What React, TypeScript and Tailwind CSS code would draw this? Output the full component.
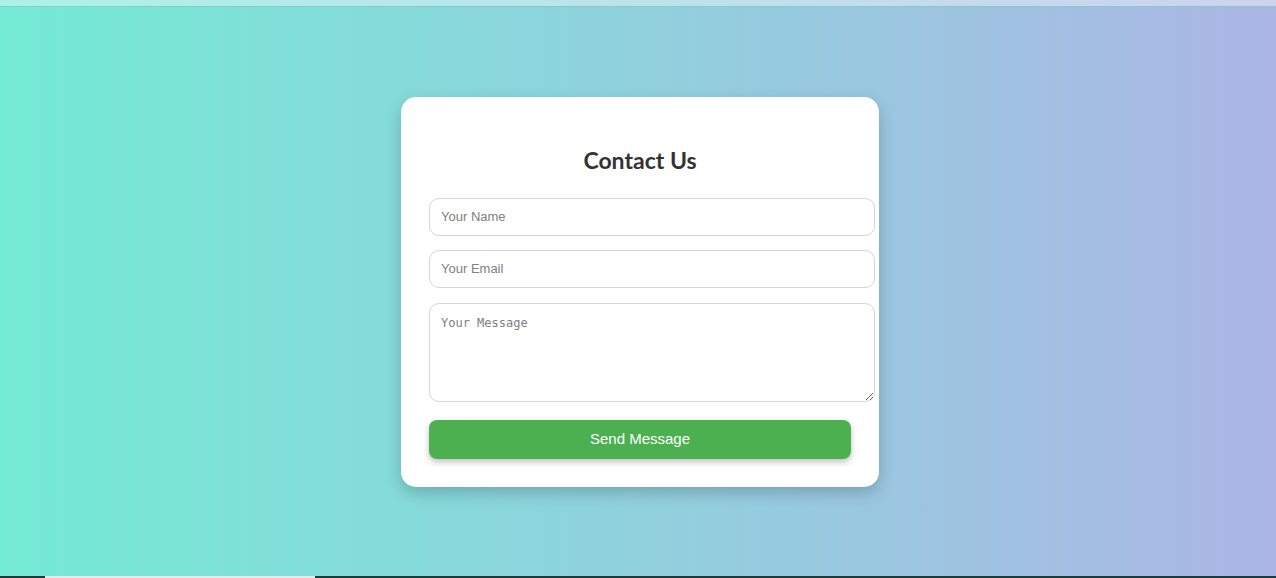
// App.tsx
import { FC } from "react";

const ContactCard: FC = () => {
  return (
    <div className="w-[478px] rounded-[15px] bg-white px-[28px] pt-[47px] pb-[28px] shadow-[0_6px_16px_rgba(0,0,0,0.2)]">
      <h2 className="text-center text-[23px] font-bold leading-[32px] text-[#333] font-['Lato','Open_Sans',sans-serif] mb-[22px]">
        Contact Us
      </h2>
      <form className="flex flex-col" onSubmit={(e) => e.preventDefault()}>
        <input
          type="text"
          placeholder="Your Name"
          className="w-[446px] h-[38px] rounded-[10px] border border-[#d4d4d4] px-[11px] text-[13px] text-[#333] placeholder:text-[#808080] font-['Liberation_Sans',Arial,sans-serif] outline-none mb-[14px]"
        />
        <input
          type="email"
          placeholder="Your Email"
          className="w-[446px] h-[38px] rounded-[10px] border border-[#d4d4d4] px-[11px] text-[13px] text-[#333] placeholder:text-[#808080] font-['Liberation_Sans',Arial,sans-serif] outline-none mb-[15px]"
        />
        <textarea
          placeholder="Your Message"
          className="w-[446px] h-[99px] rounded-[10px] border border-[#d4d4d4] px-[11px] py-[10px] text-[12px] text-[#333] placeholder:text-[#808080] font-['DejaVu_Sans_Mono',monospace] outline-none mb-[18px]"
        />
        <button
          type="submit"
          className="w-[422px] h-[39px] rounded-[8px] bg-[#4caf50] text-white text-[15px] font-['Liberation_Sans',Arial,sans-serif] shadow-[0_3px_6px_rgba(0,0,0,0.25)]"
        >
          Send Message
        </button>
      </form>
    </div>
  );
};

const App: FC = () => {
  return (
    <div className="flex h-[578px] w-full flex-col bg-[linear-gradient(to_right,#74ebd5,#acb6e5)]">
      {/* top strip */}
      <div className="h-[7px] bg-white/40 border-b border-[#8cc7cc]" />
      <div className="flex flex-1 items-center justify-center pl-[4px]">
        <ContactCard />
      </div>
      {/* bottom strip */}
      <div className="flex h-[2px] bg-[#1e3b3b]">
        <div className="ml-[45px] w-[270px] bg-[#dfeceb]" />
      </div>
    </div>
  );
};

export default App;
